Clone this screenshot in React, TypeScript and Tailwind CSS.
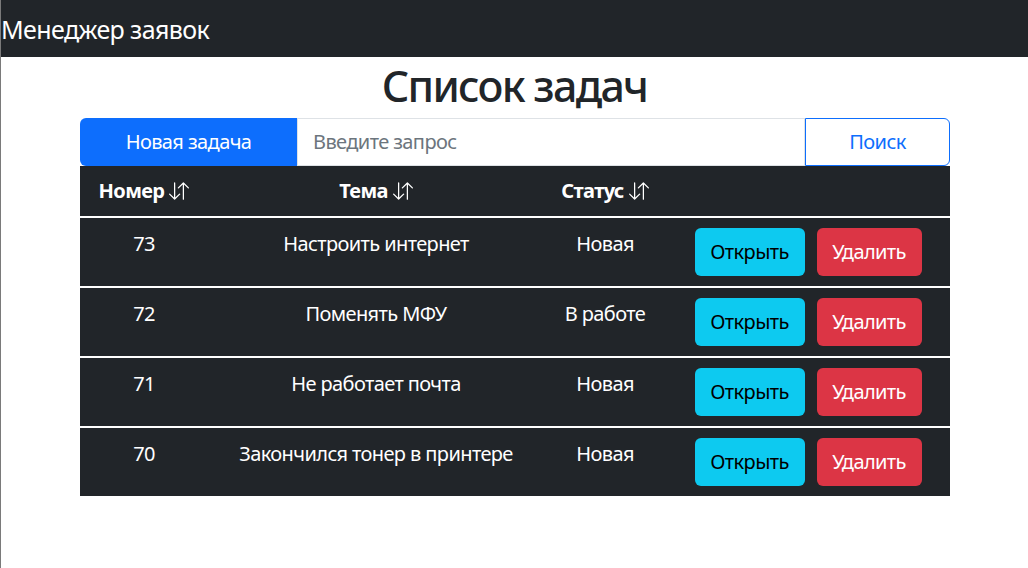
import React from "react";

const tasks = [
  { id: 73, subject: "Настроить интернет", status: "Новая" },
  { id: 72, subject: "Поменять МФУ", status: "В работе" },
  { id: 71, subject: "Не работает почта", status: "Новая" },
  { id: 70, subject: "Закончился тонер в принтере", status: "Новая" },
];

function SortIcon() {
  return (
    <svg width="20" height="20" viewBox="0 0 16 16" fill="currentColor" className="inline-block">
      <path
        fillRule="evenodd"
        d="M11.5 15a.5.5 0 0 0 .5-.5V2.707l3.146 3.147a.5.5 0 0 0 .708-.708l-4-4a.5.5 0 0 0-.708 0l-4 4a.5.5 0 1 0 .708.708L11 2.707V14.5a.5.5 0 0 0 .5.5m-7-14a.5.5 0 0 1 .5.5v11.793l3.146-3.147a.5.5 0 0 1 .708.708l-4 4a.5.5 0 0 1-.708 0l-4-4a.5.5 0 0 1 .708-.708L4 13.293V1.5a.5.5 0 0 1 .5-.5"
      />
    </svg>
  );
}

function HeaderCell({ title }: { title: string }) {
  return (
    <div className="flex items-center justify-center gap-[5px] font-bold pt-[2px]">
      <span>{title}</span>
      <SortIcon />
    </div>
  );
}

export default function App() {
  return (
    <div className="min-h-[568px] bg-white border-l border-[#7a7a7a] font-['Noto_Sans',sans-serif] text-[20px] leading-[30px] tracking-[-0.03em]">
      <nav className="h-[57px] bg-[#212529] flex items-center">
        <span className="text-[25px] text-white">Менеджер заявок</span>
      </nav>

      <h1 className="text-center text-[43px] leading-[58px] font-medium tracking-[-0.04em] text-[#212529]">
        Список задач
      </h1>

      <div className="ml-[79px] mt-[3px] w-[870px]">
        <div className="flex h-[48px]">
          <button className="w-[217px] bg-[#0d6efd] text-white rounded-l-[6px]">
            Новая задача
          </button>
          <input
            className="flex-1 border border-[#dee2e6] px-[15px] text-[#212529] placeholder:text-[#6c757d] outline-none"
            placeholder="Введите запрос"
          />
          <button className="w-[145px] border border-[#0d6efd] text-[#0d6efd] rounded-r-[6px]">
            Поиск
          </button>
        </div>

        <div className="bg-[#212529] text-white">
          <div className="grid grid-cols-[128px_336px_122px_1fr] h-[52px] pb-[2px] items-center border-b-2 border-white">
            <HeaderCell title="Номер" />
            <HeaderCell title="Тема" />
            <HeaderCell title="Статус" />
            <div />
          </div>
          {tasks.map((t, i) => (
            <div
              key={t.id}
              className={`grid grid-cols-[128px_336px_122px_1fr] py-[10px] ${
                i < tasks.length - 1 ? "border-b-2 border-white" : ""
              }`}
            >
              <div className="text-center leading-[32px]">{t.id}</div>
              <div className="text-center leading-[32px]">{t.subject}</div>
              <div className="text-center leading-[32px]">{t.status}</div>
              <div className="flex justify-center gap-[12px]">
                <button className="w-[110px] h-[48px] bg-[#0dcaf0] text-black rounded-[6px]">
                  Открыть
                </button>
                <button className="w-[105px] h-[48px] bg-[#dc3545] text-white rounded-[6px]">
                  Удалить
                </button>
              </div>
            </div>
          ))}
        </div>
      </div>
    </div>
  );
}
